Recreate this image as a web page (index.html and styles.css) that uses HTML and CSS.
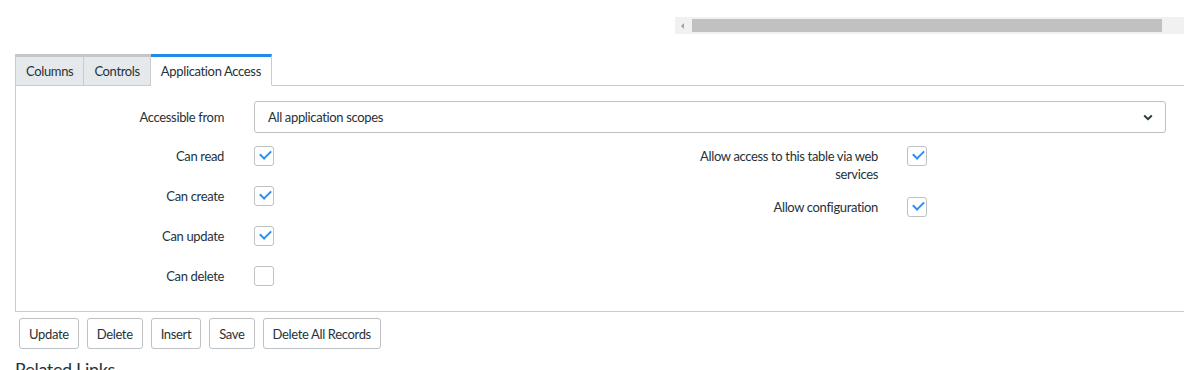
FILE: index.html
```html
<html lang="en">
  <head>
    <meta charset="UTF-8" />
    <title>Table - Application Access</title>
    <meta name="viewport" content="width=device-width,initial-scale=1" />
    <link rel="stylesheet" href="styles.css">
  </head>
  <body>
    <div class="hscroll">
      <span class="hscroll-arrow"></span>
      <div class="hscroll-thumb"></div>
    </div>

    <div class="tabs">
      <div class="tab">Columns</div>
      <div class="tab">Controls</div>
      <div class="tab active">Application Access</div>
    </div>

    <div class="panel">
      <div class="form-row wide">
        <label class="form-label">Accessible from</label>
        <div class="select">
          <span>All application scopes</span>
          <svg width="10" height="7" viewBox="0 0 10 7">
            <path d="M1.2 1.5 L5 5.2 L8.8 1.5" fill="none" stroke="#2b3a42" stroke-width="2" />
          </svg>
        </div>
      </div>

      <div class="columns">
        <div class="col">
          <div class="form-row">
            <label class="form-label">Can read</label>
            <span class="checkbox checked"></span>
          </div>
          <div class="form-row">
            <label class="form-label">Can create</label>
            <span class="checkbox checked"></span>
          </div>
          <div class="form-row">
            <label class="form-label">Can update</label>
            <span class="checkbox checked"></span>
          </div>
          <div class="form-row">
            <label class="form-label">Can delete</label>
            <span class="checkbox"></span>
          </div>
        </div>
        <div class="col right">
          <div class="form-row">
            <label class="form-label">Allow access to this table via web services</label>
            <span class="checkbox checked"></span>
          </div>
          <div class="form-row">
            <label class="form-label">Allow configuration</label>
            <span class="checkbox checked"></span>
          </div>
        </div>
      </div>
    </div>

    <div class="buttons">
      <button class="btn">Update</button>
      <button class="btn">Delete</button>
      <button class="btn">Insert</button>
      <button class="btn">Save</button>
      <button class="btn">Delete All Records</button>
    </div>

    <h3 class="related">Related Links</h3>
  </body>
</html>
```

FILE: styles.css
```css
body {
  margin: 0;
  padding-top: 17px;
  font-family: Lato, "Open Sans", sans-serif;
  font-size: 13px;
  letter-spacing: -0.35px;
  color: #25323a;
  background: #fff;
  overflow: hidden;
}
.hscroll {
  position: relative;
  margin-left: 675px;
  height: 17px;
  background: #f1f1f1;
  display: flex;
  align-items: center;
}
.hscroll-arrow {
  margin-left: 6px;
  width: 0;
  height: 0;
  border-top: 3px solid transparent;
  border-bottom: 3px solid transparent;
  border-right: 3px solid #a3a3a3;
}
.hscroll-thumb {
  margin-left: 8px;
  width: 470px;
  height: 13px;
  background: #c1c1c1;
}
.tabs {
  display: flex;
  margin: 20px 0 -1px 15px;
  position: relative;
  z-index: 1;
}
.tab {
  height: 28px;
  line-height: 29px;
  padding: 0 10px;
  background: #e6e9eb;
  border: 1px solid #c9cbce;
  border-top: 3px solid #c4c7ca;
  border-left: none;
}
.tab:first-child {
  border-left: 1px solid #c9cbce;
}
.tab.active {
  background: #fff;
  border-top-color: #1f8ceb;
  border-bottom-color: #fff;
}
.panel {
  margin-left: 15px;
  width: 1168px;
  border: 1px solid #c9cbce;
  padding: 15px 0 19px;
}
.form-row {
  display: flex;
  align-items: flex-start;
  min-height: 26px;
  margin-bottom: 14px;
}
.form-row:last-child {
  margin-bottom: 0;
}
.form-label {
  width: 208px;
  padding-right: 30px;
  padding-top: 1px;
  text-align: right;
  line-height: 18px;
  box-sizing: content-box;
  flex-shrink: 0;
}
.form-row.wide {
  align-items: center;
  min-height: 0;
  margin-bottom: 13px;
}
.form-row.wide .form-label {
  padding-top: 0;
}
.select {
  flex: 1;
  margin-right: 18px;
  height: 30px;
  border: 1px solid #bdc0c4;
  border-radius: 3px;
  display: flex;
  align-items: center;
  justify-content: space-between;
  padding: 0 12px 0 13px;
}
.columns {
  display: grid;
  grid-template-columns: 654px 1fr;
}
.col.right .form-label {
  width: 186px;
  padding-left: 22px;
  padding-right: 29px;
}
.checkbox {
  width: 18px;
  height: 18px;
  border: 1px solid #bdc0c4;
  border-radius: 3px;
  flex-shrink: 0;
  position: relative;
}
.checkbox.checked::after {
  content: "";
  position: absolute;
  left: 5px;
  top: 3px;
  width: 9px;
  height: 5px;
  border-left: 2px solid #278efc;
  border-bottom: 2px solid #278efc;
  transform: rotate(-45deg);
}
.buttons {
  display: flex;
  gap: 8px;
  margin: 6px 0 0 19px;
}
.btn {
  font-family: Lato, "Open Sans", sans-serif;
  font-size: 13px;
  letter-spacing: -0.35px;
  color: #25323a;
  background: #fff;
  border: 1px solid #bdc0c4;
  border-radius: 3px;
  height: 31px;
  padding: 0 9px;
}
.related {
  margin: 9px 0 0 15px;
  font-size: 18px;
  font-weight: normal;
}
```
